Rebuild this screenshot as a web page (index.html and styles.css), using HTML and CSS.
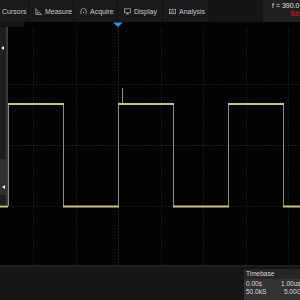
FILE: index.html
```html
<!DOCTYPE html>
<html>
<head>
<meta charset="utf-8">
<link rel="stylesheet" href="styles.css">
</head>
<body>
<div class="app">
  <div class="menubar">
    <div class="item w-cursors"><span class="label">Cursors</span></div>
    <div class="item w-measure">
      <svg class="icon" viewBox="0 0 8 8"><path d="M1 0.5V7.5H7.5L1 1.5M2.5 4.5V6H4" fill="none" stroke="#bbb" stroke-width="0.8"/></svg>
      <span class="label">Measure</span>
    </div>
    <div class="item w-acquire">
      <svg class="icon" viewBox="0 0 8 8"><path d="M1 7V3.5A3 3 0 0 1 7 3.5V7" fill="none" stroke="#bbb" stroke-width="0.8"/><circle cx="4" cy="5" r="0.8" fill="#bbb"/></svg>
      <span class="label">Acquire</span>
    </div>
    <div class="item w-display">
      <svg class="icon" viewBox="0 0 8 8"><rect x="0.5" y="1" width="7" height="4.5" fill="none" stroke="#bbb" stroke-width="0.8"/><path d="M4 5.5V7M2.5 7H5.5" stroke="#bbb" stroke-width="0.8"/></svg>
      <span class="label">Display</span>
    </div>
    <div class="item w-analysis">
      <svg class="icon" viewBox="0 0 8 8"><rect x="0.5" y="1.5" width="7" height="5" fill="none" stroke="#bbb" stroke-width="0.8"/><path d="M2 3.5H4M2 5H3.5M5 3V5.5" stroke="#bbb" stroke-width="0.8"/></svg>
      <span class="label">Analysis</span>
    </div>
    <div class="filler"></div>
    <div class="status">
      <span class="freq">f = 390.0</span>
      <span class="stop">Stop</span>
    </div>
  </div>

  <div class="scope">
    <svg class="grid" viewBox="0 22 300 243" width="300" height="243">
      <rect x="0" y="22" width="300" height="243" fill="#030303"/>
      <rect x="0" y="22" width="24" height="5" fill="#141414"/>
      <g stroke="#161616" stroke-width="1" stroke-dasharray="2 1">
        <line x1="33.5" y1="27" x2="33.5" y2="265"/>
        <line x1="76.5" y1="27" x2="76.5" y2="265"/>
        <line x1="161.5" y1="27" x2="161.5" y2="265"/>
        <line x1="203.5" y1="27" x2="203.5" y2="265"/>
        <line x1="246.5" y1="27" x2="246.5" y2="265"/>
        <line x1="288.5" y1="27" x2="288.5" y2="265"/>
        <line x1="0" y1="84.5" x2="300" y2="84.5"/>
        <line x1="0" y1="206.5" x2="300" y2="206.5"/>
      </g>
      <g stroke="#202020" stroke-width="1" stroke-dasharray="2 1">
        <line x1="118.5" y1="27" x2="118.5" y2="265"/>
        <line x1="0" y1="145.5" x2="300" y2="145.5"/>
      </g>
      <polygon points="113,22.5 123,22.5 118,27" fill="#3d87e6"/>
      <g stroke="#2a2a5a" stroke-width="1" opacity="0.6">
        <line x1="9" y1="102.5" x2="63" y2="102.5" stroke-dasharray="1 2"/>
        <line x1="119" y1="102.5" x2="173" y2="102.5" stroke-dasharray="1 2"/>
        <line x1="229" y1="102.5" x2="283" y2="102.5" stroke-dasharray="1 2"/>
      </g>
      <g stroke="#8c8c80" stroke-width="1" fill="none">
        <line x1="8.5" y1="104" x2="8.5" y2="206"/>
        <line x1="63.5" y1="104" x2="63.5" y2="206"/>
        <line x1="118.5" y1="104" x2="118.5" y2="206"/>
        <line x1="173.5" y1="104" x2="173.5" y2="206"/>
        <line x1="228.5" y1="104" x2="228.5" y2="206"/>
        <line x1="283.5" y1="104" x2="283.5" y2="206"/>
        <line x1="122.5" y1="88" x2="122.5" y2="104"/>
      </g>
      <g stroke="#c2c48a" stroke-width="2" fill="none">
        <line x1="0" y1="206.5" x2="8" y2="206.5"/>
        <line x1="8" y1="104" x2="64" y2="104"/>
        <line x1="63" y1="206.5" x2="119" y2="206.5"/>
        <line x1="118" y1="104" x2="174" y2="104"/>
        <line x1="173" y1="206.5" x2="229" y2="206.5"/>
        <line x1="228" y1="104" x2="284" y2="104"/>
        <line x1="283" y1="206.5" x2="300" y2="206.5"/>
      </g>
    </svg>
    <div class="sidepanel">
      <span class="arrow a1"></span>
      <div class="sidelight"><span class="arrow a2"></span></div>
    </div>
  </div>

  <div class="bottombar">
    <div class="timebase">
      <div class="tb-head">Timebase</div>
      <div class="tb-body">
        <div class="tb-row"><span>0.00s</span><span>1.00us/d</span></div>
        <div class="tb-row"><span>50.0kS</span><span>5.00GS</span></div>
      </div>
    </div>
  </div>
</div>
</body>
</html>
```

FILE: styles.css
```css
html, body {
  margin: 0;
  padding: 0;
  background: #000;
}
body {
  width: 300px;
  height: 300px;
  overflow: hidden;
  font-family: "Liberation Sans", Arial, sans-serif;
}
.app {
  width: 300px;
  height: 300px;
  display: flex;
  flex-direction: column;
}
.menubar {
  height: 22px;
  flex: none;
  display: flex;
  background: #1a1a1a;
  color: #c8c8c8;
  font-size: 7px;
}
.item {
  display: flex;
  align-items: center;
  gap: 3px;
  padding-left: 6px;
  box-sizing: border-box;
  border-right: 1px solid #101010;
  white-space: nowrap;
  overflow: hidden;
}
.icon {
  width: 7px;
  height: 7px;
  flex: none;
}
.w-cursors { width: 29px; padding-left: 2px; }
.w-measure { width: 45px; }
.w-acquire { width: 44px; }
.w-display { width: 45px; }
.w-analysis { width: 47px; }
.filler {
  flex: 1;
  background: #151515;
}
.status {
  width: 37px;
  flex: none;
  background: #202020;
  display: flex;
  flex-direction: column;
  padding: 2px 0 0 9px;
  box-sizing: border-box;
  white-space: nowrap;
  overflow: hidden;
  line-height: 8px;
}
.freq { color: #e0e0e0; font-size: 7px; }
.stop { color: #b01818; font-size: 7px; padding-left: 18px; font-weight: bold; }
.scope {
  position: relative;
  height: 243px;
  flex: none;
}
.grid {
  display: block;
}
.sidepanel {
  position: absolute;
  left: 0;
  top: 5px;
  width: 6px;
  height: 178px;
  background: #1e1e1e;
  border-right: 2px solid #3a3a3a;
  display: flex;
  flex-direction: column;
  justify-content: space-between;
  align-items: flex-start;
}
.arrow {
  display: block;
  width: 0;
  height: 0;
  border-top: 2px solid transparent;
  border-bottom: 2px solid transparent;
  border-right: 3px solid #eee;
}
.a1 { margin: 19px 0 0 1px; }
.sidelight {
  width: 6px;
  height: 36px;
  margin-bottom: 10px;
  background: #303030;
  display: flex;
  align-items: flex-end;
}
.a2 { margin: 0 0 6px 2px; }
.bottombar {
  flex: 1;
  background: #161616;
  border-top: 2px solid #1f1f1f;
  display: flex;
  justify-content: flex-end;
  padding-top: 2px;
}
.timebase {
  width: 56px;
  background: #2c2c2c;
  color: #d8d8d8;
  font-size: 6.5px;
  display: flex;
  flex-direction: column;
}
.tb-head {
  height: 10px;
  line-height: 10px;
  padding-left: 2px;
  background: #262626;
}
.tb-body {
  flex: 1;
  background: #333333;
  padding: 1px 0 0 2px;
}
.tb-row {
  display: flex;
  justify-content: space-between;
  white-space: nowrap;
  line-height: 8px;
  width: 60px;
}
```
